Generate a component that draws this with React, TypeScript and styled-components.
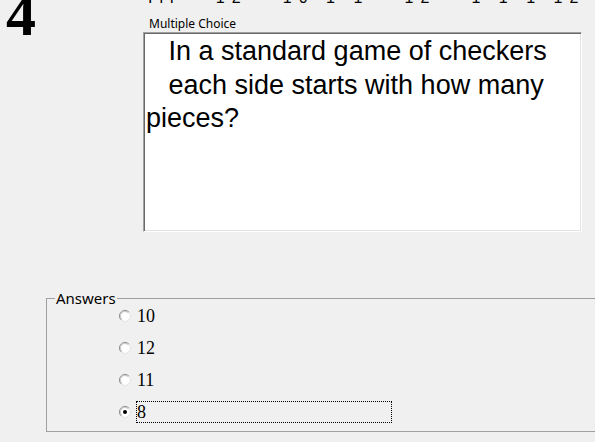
import React from "react";
import styled, { createGlobalStyle } from "styled-components";

const Global = createGlobalStyle`
  html, body {
    margin: 0;
    padding: 0;
    background: #f0f0f0;
  }
  body {
    font-family: "Noto Sans", "Liberation Sans", sans-serif;
    color: #000;
  }
`;

const Page = styled.div`
  width: 595px;
  height: 442px;
  overflow: hidden;
  background: #f0f0f0;
`;

const TopRow = styled.div`
  display: flex;
  align-items: flex-start;
`;

const QuestionNumber = styled.div`
  width: 137px;
  padding-left: 6px;
  margin-top: -15px;
  font-family: "Liberation Serif", "Times New Roman", serif;
  font-weight: bold;
  font-size: 60px;
  line-height: 60px;
`;

const QuestionColumn = styled.div`
  display: flex;
  flex-direction: column;
  width: 439px;
`;

const ClippedTitle = styled.div`
  height: 4px;
  overflow: hidden;
  display: flex;
  align-items: flex-end;
  padding-left: 5px;
  font-family: "Liberation Sans", Arial, sans-serif;
  font-size: 16px;
  line-height: 16px;
  white-space: nowrap;
  letter-spacing: 7px;
`;

const TitleText = styled.span`
  display: block;
  margin-bottom: -2px;
`;

const TypeLabel = styled.div`
  margin-top: 12px;
  padding-left: 6px;
  height: 16px;
  font-family: "Noto Sans", sans-serif;
  font-size: 12px;
  line-height: 16px;
`;

const QuestionBox = styled.div`
  box-sizing: border-box;
  height: 200px;
  background: #fff;
  border: 1px solid;
  border-color: #a0a0a0 #fff #fff #a0a0a0;
  box-shadow: inset 1px 1px 0 #696969, inset -1px -1px 0 #e3e3e3;
  padding: 2px 2px 0 2px;
  font-family: "Liberation Sans", Arial, sans-serif;
  font-size: 27px;
  line-height: 33.5px;
  white-space: pre;
  overflow: hidden;
`;

const AnswersGroup = styled.fieldset`
  margin: 58px 0 0 46px;
  padding: 0 0 8px 0;
  width: 600px;
  box-sizing: border-box;
  border: 1px solid #a0a0a0;
  border-right: none;
  min-width: 0;
`;

const GroupLegend = styled.legend`
  margin-left: 8px;
  padding: 0 1px;
  font-family: "Noto Sans", sans-serif;
  font-size: 15px;
  line-height: 16px;
`;

const OptionList = styled.div`
  display: flex;
  flex-direction: column;
  gap: 10px;
  margin-top: -1px;
  padding-left: 72px;
`;

const OptionRow = styled.label`
  display: flex;
  align-items: center;
  height: 22px;
  gap: 5px;
`;

const RadioMark = styled.svg`
  flex: none;
  display: block;
`;

const OptionText = styled.span<{ $focused?: boolean }>`
  box-sizing: border-box;
  display: flex;
  align-items: center;
  width: 256px;
  height: 22px;
  padding-left: 1px;
  font-family: "Liberation Serif", "Times New Roman", serif;
  font-size: 18px;
  outline: ${(p) => (p.$focused ? "1px dotted #000" : "none")};
  outline-offset: -1px;
`;

function Radio({ checked }: { checked?: boolean }) {
  return (
    <RadioMark width="12" height="12" viewBox="0 0 12 12">
      <circle cx="6" cy="6" r="5" fill="#fff" />
      <path d="M9.9 2.1 A5.5 5.5 0 0 0 2.1 9.9" fill="none" stroke="#8a8a8a" strokeWidth="1" />
      <path d="M2.1 9.9 A5.5 5.5 0 0 0 9.9 2.1" fill="none" stroke="#e3e3e3" strokeWidth="1" />
      <path d="M9.2 2.8 A4.5 4.5 0 0 0 2.8 9.2" fill="none" stroke="#c8c8c8" strokeWidth="1" />
      {checked && <circle cx="6" cy="6" r="2" fill="#000" />}
    </RadioMark>
  );
}

const options = [
  { label: "10", checked: false },
  { label: "12", checked: false },
  { label: "11", checked: false },
  { label: "8", checked: true },
];

export default function App() {
  return (
    <Page>
      <Global />
      <TopRow>
        <QuestionNumber>4</QuestionNumber>
        <QuestionColumn>
          <ClippedTitle>
            <TitleText>Ill - 12 - 10 1 1 - 12 - 1 1 1 12 1 - 111 1</TitleText>
          </ClippedTitle>
          <TypeLabel>Multiple Choice</TypeLabel>
          <QuestionBox>
            {"   In a standard game of checkers\n   each side starts with how many\npieces?"}
          </QuestionBox>
        </QuestionColumn>
      </TopRow>
      <AnswersGroup>
        <GroupLegend>Answers</GroupLegend>
        <OptionList>
          {options.map((o) => (
            <OptionRow key={o.label}>
              <Radio checked={o.checked} />
              <OptionText $focused={o.checked}>{o.label}</OptionText>
            </OptionRow>
          ))}
        </OptionList>
      </AnswersGroup>
    </Page>
  );
}
